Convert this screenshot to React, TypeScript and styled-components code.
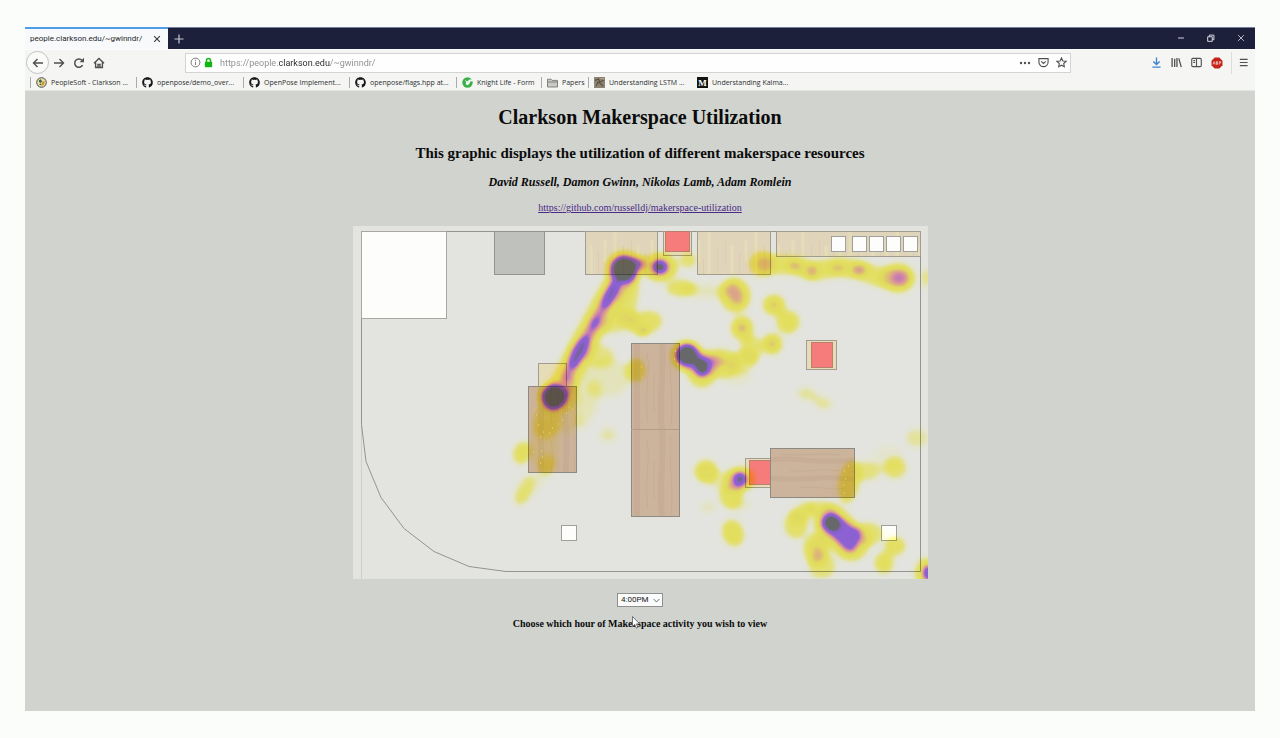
import React, { useState } from "react";
import styled, { createGlobalStyle } from "styled-components";
import { FaGithub } from "react-icons/fa";

const UI = `Roboto, "Open Sans", sans-serif`;
const UI_SMALL = `"Open Sans", "Noto Sans", sans-serif`;
const SERIF = `"Liberation Serif", "Times New Roman", serif`;

const GlobalStyle = createGlobalStyle`
  *, *::before, *::after { box-sizing: border-box; }
  html, body { margin: 0; background: #fbfdfa; }
  button, input, select { font: inherit; color: inherit; }
`;

const Desktop = styled.div`
  min-height: 100vh;
  padding: 27px 25px;
  display: flex;
  flex-direction: column;
`;

const BrowserWindow = styled.div`
  flex: 1;
  display: flex;
  flex-direction: column;
  background: #d1d3cf;
`;

const TitleBar = styled.div`
  display: flex;
  justify-content: space-between;
  height: 22px;
  background: #1d203b;
  border-top: 1px solid #7480a0;
  color: #c9cbd6;
`;

const TabStrip = styled.div`
  display: flex;
`;

const Tab = styled.div`
  display: flex;
  align-items: center;
  justify-content: space-between;
  width: 143px;
  margin-top: -1px;
  padding: 0 5px;
  background: #f8f9fa;
  border-top: 2px solid #4f9ce8;
  color: #26282c;
  font: 8px/12px ${UI};
`;

const IconButton = styled.button<{ $size?: number; $ring?: boolean }>`
  display: inline-flex;
  align-items: center;
  justify-content: center;
  width: ${(p) => p.$size ?? 20}px;
  height: ${(p) => p.$size ?? 20}px;
  padding: 0;
  border: ${(p) => (p.$ring ? "1px solid #c2c3c2" : "0")};
  border-radius: ${(p) => (p.$ring ? "50%" : "0")};
  background: ${(p) => (p.$ring ? "#fafbf9" : "none")};
  flex: none;
`;

const WindowButtons = styled.div`
  display: flex;
  gap: 10px;
  padding-right: 4px;
`;

const NavBar = styled.div`
  display: flex;
  align-items: center;
  height: 26px;
  background: #f5f6f3;
  color: #4e5052;
  border-top: 1px solid #fcfcff;
`;

const NavGroup = styled.div`
  display: flex;
  align-items: center;
  width: 160px;
  padding-left: 1px;
`;

const AddressBar = styled.form`
  flex: 1;
  min-width: 0;
  display: flex;
  align-items: center;
  height: 20px;
  padding-left: 4px;
  gap: 2px;
  background: #fdfefd;
  border: 1px solid #d3d4d2;
`;

const AddressInput = styled.input`
  flex: 1;
  min-width: 0;
  height: 16px;
  margin-left: 4px;
  padding: 0;
  border: 0;
  outline: 0;
  font: 9px/16px ${UI};
  color: transparent;
  caret-color: #26282c;
  background: linear-gradient(90deg, #8b8d8f 58px, #26282c 58px, #26282c 110px, #8b8d8f 110px);
  background-clip: text;
  -webkit-background-clip: text;
`;

const AddressActions = styled.div`
  display: flex;
  align-items: center;
`;

const ToolGroup = styled.div`
  display: flex;
  align-items: center;
  justify-content: flex-end;
  width: 184px;
  padding-right: 2px;
`;

const ToolDivider = styled.span`
  width: 1px;
  height: 22px;
  margin: 0 1px 0 3px;
  background: #dcdddb;
`;

const Bookmarks = styled.nav`
  display: flex;
  align-items: center;
  height: 16px;
  padding-left: 5px;
  background: #f5f6f3;
  border-bottom: 1px solid #e3e4e1;
`;

const Bookmark = styled.a<{ $width: number; $divider?: boolean }>`
  display: flex;
  align-items: center;
  gap: 4px;
  width: ${(p) => p.$width}px;
  height: 11px;
  padding-left: 5px;
  border-left: 1px solid ${(p) => (p.$divider ? "#a9abac" : "transparent")};
  color: #2c2e31;
  font: 7px/10px ${UI_SMALL};
  text-decoration: none;
  white-space: nowrap;
  svg { flex: none; }
`;

const Page = styled.main`
  flex: 1;
  display: flex;
  flex-direction: column;
  align-items: center;
  padding: 14px 8px;
  color: #0b0c0b;
  font-family: ${SERIF};
  text-align: center;
`;

const Title = styled.h1`
  margin: 0 0 14px;
  font-size: 20px;
  line-height: 24px;
`;

const Subtitle = styled.h2`
  margin: 0 0 11px;
  font-size: 15px;
  line-height: 20px;
`;

const Authors = styled.h3`
  margin: 0 0 12px;
  font-size: 12px;
  line-height: 16px;
  font-style: italic;
`;

const RepoLink = styled.a`
  margin-bottom: 12px;
  font-size: 10px;
  line-height: 12px;
  color: #4a2a84;
`;

const FloorPlan = styled.svg`
  display: block;
  width: 100%;
  max-width: 575px;
  height: auto;
  background: #e3e4e0;
  isolation: isolate;
`;

const HourPicker = styled.div`
  display: grid;
  margin: 14px 0 9px;
  align-items: center;
  > * { grid-area: 1 / 1; }
  > svg { justify-self: end; margin-right: 3px; pointer-events: none; }
`;

const HourSelect = styled.select`
  appearance: none;
  width: 46px;
  height: 14px;
  padding: 0 0 0 3px;
  border: 1px solid #8e908f;
  border-radius: 0;
  background: #fafbfa;
  color: #1c1d1e;
  font: 8px/12px ${UI};
`;

const HourLabel = styled.label`
  position: relative;
  font-size: 10px;
  line-height: 16px;
  font-weight: bold;
`;

const Pointer = styled.svg`
  position: absolute;
  left: 47%;
  top: 0;
`;

type Tone = "dark" | "light";

const bookmarks: { label: string; width: number; divider: boolean; icon: React.ReactNode }[] = [
  { label: "PeopleSoft - Clarkson ...", width: 106, divider: true, icon: <SealIcon /> },
  { label: "openpose/demo_over...", width: 107, divider: true, icon: <FaGithub size={11} color="#15171a" /> },
  { label: "OpenPose Implement...", width: 106, divider: true, icon: <FaGithub size={11} color="#15171a" /> },
  { label: "openpose/flags.hpp at...", width: 107, divider: true, icon: <FaGithub size={11} color="#15171a" /> },
  { label: "Knight Life - Form", width: 85, divider: true, icon: <KnightIcon /> },
  { label: "Papers", width: 47, divider: true, icon: <FolderIcon /> },
  { label: "Understanding LSTM ...", width: 103, divider: true, icon: <SpiralIcon /> },
  { label: "Understanding Kalma...", width: 106, divider: false, icon: <MediumIcon /> },
];

function SealIcon() {
  return (
    <svg width="11" height="11" viewBox="0 0 11 11">
      <circle cx="5.5" cy="5.5" r="4.8" fill="#e9dfa6" stroke="#4a4c48" strokeWidth="1" />
      <path d="M2.6 3.4 5 2.2l1 2.2-2 1.8z" fill="#3d5f4f" />
      <path d="M5.6 4.8 8.6 4l-.4 3.6-2.2 1z" fill="#c99a2a" />
      <path d="M3 7.4 5 6.6l.8 2z" fill="#4e514d" />
    </svg>
  );
}

function KnightIcon() {
  return (
    <svg width="11" height="11" viewBox="0 0 11 11">
      <circle cx="5.5" cy="5.5" r="5.2" fill="#3bb04b" />
      <path d="M3 2.8 5.2 4.6 7.6 2.6l3.4-.4-.4 2-2.400.4-.8 2.200-2 1.400-1.600-1 .4-1.800z" fill="#f5f6f3" />
    </svg>
  );
}

function FolderIcon() {
  return (
    <svg width="11" height="10" viewBox="0 0 11 10" fill="#c9cac6" stroke="#777975" strokeWidth=".9">
      <path d="M.5 9V1.2h3.6l1 1.2h5.4V9z" />
      <path d="M.5 4h10" />
    </svg>
  );
}

function SpiralIcon() {
  return (
    <svg width="11" height="11" viewBox="0 0 11 11">
      <path d="M0 0h11v11H0z" fill="#8c8371" />
      <path d="M1 3.5 4.5 2 5.8 5 9.8 3.2M2 9l2-4 2.6 1.6L9 9" fill="none" stroke="#564f42" strokeWidth="1.2" />
      <path d="M6.5 1.5h3v1M1 6.5v2" fill="none" stroke="#b9b19e" strokeWidth=".8" />
    </svg>
  );
}

function MediumIcon() {
  return (
    <svg width="11" height="11" viewBox="0 0 11 11">
      <path d="M0 0h11v11H0z" fill="#12140f" />
      <text x="5.5" y="9" textAnchor="middle" fill="#fff" fontFamily="Liberation Serif, serif" fontWeight="bold" fontSize="9">M</text>
    </svg>
  );
}

function LineIcon({ d, size = 12, width = 1.2, color = "currentColor" }: { d: string; size?: number; width?: number; color?: string }) {
  return (
    <svg width={size} height={size} viewBox="0 0 12 12" fill="none" stroke={color} strokeWidth={width}>
      <path d={d} />
    </svg>
  );
}

/* cx, cy, rx, ry, rotation, intensity */
type Blob = [number, number, number, number, number, number];

const warmBlobs: Blob[] = [
  [624, 268, 19, 18, 0, 0.34],
  [554, 397, 17, 16, 0, 0.34],
  [546, 421, 14, 17, 10, 0.24],
  [545, 445, 15, 26, 0, 0.13],
  [522, 453, 9, 12, 15, 0.3],
  [547, 465, 10, 9, 0, 0.2],
  [524, 490, 8, 17, 25, 0.18],
  [572, 393, 9, 16, 0, 0.22],
  [566, 420, 14, 15, 0, 0.12],
  [588, 405, 10, 26, 20, 0.13],
  [608, 435, 9, 8, 0, 0.15],
  [600, 356, 15, 11, 0, 0.2],
  [606, 378, 26, 20, 0, 0.12],
  [620, 322, 20, 10, -20, 0.22],
  [628, 300, 10, 26, 15, 0.25],
  [636, 370, 10, 12, 0, 0.32],
  [645, 323, 18, 12, -15, 0.28],
  [660, 267, 18, 15, 0, 0.34],
  [688, 260, 9, 8, 0, 0.25],
  [681, 288, 15, 9, 0, 0.28],
  [706, 291, 24, 8, 0, 0.12],
  [735, 295, 16, 18, -15, 0.31],
  [774, 305, 12, 11, 0, 0.29],
  [788, 322, 12, 12, 0, 0.3],
  [742, 328, 12, 13, 0, 0.28],
  [751, 349, 11, 14, 0, 0.26],
  [772, 344, 11, 11, 0, 0.3],
  [741, 362, 17, 11, -20, 0.22],
  [720, 363, 20, 15, 0, 0.25],
  [687, 356, 17, 16, 0, 0.34],
  [702, 369, 16, 19, 0, 0.3],
  [736, 377, 16, 8, 0, 0.1],
  [762, 264, 14, 14, 0, 0.2],
  [926, 278, 5, 10, 0, 0.22],
  [898, 278, 18, 16, 0, 0.24],
  [807, 394, 11, 7, 10, 0.17],
  [823, 403, 10, 7, 15, 0.17],
  [706, 471, 12, 12, 0, 0.27],
  [740, 479, 16, 13, 0, 0.3],
  [731, 496, 12, 13, 0, 0.28],
  [733, 533, 11, 14, -20, 0.31],
  [708, 507, 9, 6, 0, 0.12],
  [740, 505, 12, 7, 0, 0.1],
  [849, 482, 11, 22, 10, 0.3],
  [866, 471, 15, 10, 0, 0.22],
  [895, 468, 12, 11, 0, 0.25],
  [888, 458, 16, 14, 0, 0.07],
  [917, 438, 12, 10, 0, 0.17],
  [796, 525, 12, 14, 0, 0.28],
  [803, 512, 14, 9, -20, 0.22],
  [820, 508, 16, 8, 0, 0.2],
  [816, 549, 13, 16, 0, 0.3],
  [822, 566, 14, 13, 0, 0.24],
  [868, 534, 15, 12, 0, 0.26],
  [895, 546, 11, 10, 0, 0.29],
  [884, 563, 10, 11, 0, 0.3],
  [926, 574, 12, 17, 0, 0.28],
];

const hotBlobs: Blob[] = [
  [611, 294, 6, 15, 30, 0.62],
  [595, 323, 5, 7, 20, 0.34],
  [579, 352, 7, 17, 28, 0.64],
  [638, 263, 8, 7, 0, 0.55],
  [643, 331, 5, 5, 0, 0.36],
  [660, 267, 8, 7, 0, 0.92],
  [735, 294, 8, 12, -25, 0.34],
  [774, 305, 5, 5, 0, 0.3],
  [742, 328, 6, 6, 0, 0.34],
  [772, 344, 5, 5, 0, 0.3],
  [717, 361, 9, 7, 0, 0.34],
  [765, 264, 8, 7, 0, 0.12],
  [795, 266, 8, 5, 10, 0.34],
  [812, 271, 7, 7, 0, 0.34],
  [838, 268, 9, 5, 0, 0.3],
  [859, 270, 8, 6, 0, 0.42],
  [899, 278, 9, 8, 0, 0.34],
  [740, 479, 7, 7, 0, 0.86],
  [817, 551, 6, 7, 0, 0.26],
  [928, 573, 5, 8, 0, 0.9],
  [624, 269, 13, 13, 0, 1],
  [554, 397, 12, 12, 0, 1],
  [687, 355, 11, 11, 0, 1],
  [702, 367, 8, 10, 0, 0.92],
  [831, 523, 10, 9, 0, 0.88],
];

function Blobs({ items }: { items: Blob[] }) {
  return (
    <>
      {items.map(([cx, cy, rx, ry, angle, level]) => (
        <ellipse key={`${cx}-${cy}`} cx={cx} cy={cy} rx={rx} ry={ry} opacity={level} transform={`rotate(${angle} ${cx} ${cy})`} />
      ))}
    </>
  );
}

function Table({ x, y, w, h, tone }: { x: number; y: number; w: number; h: number; tone: Tone }) {
  return <rect x={x + 0.5} y={y + 0.5} width={w} height={h} fill={`url(#${tone}-wood)`} stroke={tone === "dark" ? "#8d8983" : "#a39c8f"} />;
}

const speckles = [
  [536, 414], [538, 424], [543, 431], [549, 432], [558, 423], [562, 419], [566, 412], [569, 406], [534, 408],
  [540, 436], [541, 450], [542, 456], [540, 462], [533, 451], [552, 427], [572, 408], [844, 470], [845, 478],
  [843, 484], [844, 492], [848, 465], [675, 350], [674, 358], [677, 363], [642, 376], [641, 366],
];

function UtilizationMap() {
  return (
    <FloorPlan viewBox="353 226 575 353" role="img" aria-label="Makerspace floor plan with activity heat map">
      <defs>
        <pattern id="light-wood" width="47" height="60" patternUnits="userSpaceOnUse">
          <path d="M0 0h47v60H0z" fill="#e0d5bb" />
          <path d="M4 0v60M27 5v40M41 0v22" stroke="#e5dcba" strokeWidth="3" />
          <path d="M12.500 6v30M20.500 0v25M34.500 12v40M45.500 20v30" stroke="#ddcdaf" />
        </pattern>
        <pattern id="dark-wood" width="48" height="87" x="631" y="343" patternUnits="userSpaceOnUse">
          <path d="M0 0h48v87H0z" fill="#ccb39b" />
          <path d="M6 0v87M31 0c3 30-4 50 0 87" stroke="#c7ad96" strokeWidth="6" fill="none" />
          <path d="M16 10c4 20-3 40 1 70M40 5c-3 25 3 45 0 78M23 30v40" stroke="#c1a790" fill="none" opacity=".6" />
        </pattern>
        <pattern id="board-wood" width="85" height="49" x="770" y="448" patternUnits="userSpaceOnUse">
          <path d="M0 0h85v49H0z" fill="#ccb39b" />
          <path d="M0 12c25-4 50 5 85 0M0 30c30 4 55-4 85 2" stroke="#c7ad96" strokeWidth="5" fill="none" />
          <path d="M10 6c20 3 40-2 60 1M20 22c15 4 30-3 50 1M30 40c18-3 26 3 45 0" stroke="#c1a790" fill="none" opacity=".6" />
        </pattern>
        <filter id="heat" x="353" y="226" width="575" height="353" filterUnits="userSpaceOnUse" colorInterpolationFilters="sRGB">
          <feGaussianBlur stdDeviation="3" />
          <feColorMatrix values="0 0 0 1 0  0 0 0 1 0  0 0 0 1 0  0 0 0 0 1" />
          <feComponentTransfer>
            <feFuncR type="table" tableValues="1 1 1 1 .99 .98 .95 .63 .61 .45 .45" />
            <feFuncG type="table" tableValues="1 1 .99 .98 .96 .8 .6 .43 .42 .455 .455" />
            <feFuncB type="table" tableValues="1 .9 .6 .42 .42 .54 .73 .94 .94 .47 .47" />
          </feComponentTransfer>
        </filter>
      </defs>

      <path d="M361.500 232v347" stroke="#d5cbc7" />
      <path d="M361.500 231.500h559v340H506l-37-5-35-15-30-23-23-31-15-36-4.500-37z" fill="none" stroke="#92948f" />
      <rect x="361.500" y="231.500" width="85" height="87" fill="#fdfefc" stroke="#aaa6a2" />
      <rect x="494.500" y="231.500" width="50" height="43" fill="#bfc1bc" stroke="#92948f" />

      <Table x={585} y={231} w={72} h={43} tone="light" />
      <Table x={697} y={231} w={73} h={43} tone="light" />
      <Table x={776} y={231} w={144} h={25} tone="light" />
      <g fill="#fdfefc" stroke="#9fa09c">
        {[831, 852, 869, 886, 903].map((x) => (
          <rect key={x} x={x + 0.5} y="236.500" width="14" height="15" />
        ))}
        <rect x="561.500" y="525.500" width="15" height="15" />
        <rect x="881.500" y="525.500" width="15" height="15" />
      </g>

      <g fill="#e6dcb8" stroke="#a39c8f">
        <rect x="663.500" y="231.500" width="28" height="24" />
        <rect x="806.500" y="340.500" width="30" height="29" />
        <rect x="745.500" y="458.500" width="25" height="29" />
        <rect x="538.500" y="363.500" width="28" height="23" />
      </g>
      <g fill="#f57c7b" stroke="#b9806f">
        <rect x="665.500" y="231.500" width="24" height="20" />
        <rect x="811.500" y="342.500" width="21" height="25" />
        <rect x="749.500" y="460.500" width="21" height="24" />
      </g>

      <Table x={528} y={386} w={48} h={86} tone="dark" />
      <Table x={631} y={343} w={48} h={173} tone="dark" />
      <path d="M631 429.500h48" stroke="#b39c88" />
      <rect x="770.500" y="448.500" width="84" height="49" fill="url(#board-wood)" stroke="#8d8983" />

      <g style={{ mixBlendMode: "multiply" }}>
        <g filter="url(#heat)">
          <Blobs items={warmBlobs} />
          <g fill="none" stroke="#000" strokeLinecap="round" strokeLinejoin="round">
            <path d="M618 282 609 297 595 323 579 352 562 386" strokeWidth="27" opacity=".3" />
            <path d="M615 286 609 297 595 323 579 352 566 378" strokeWidth="11" opacity=".5" />
            <path d="M762 264 795 265 812 271 840 267 860 270 878 277 902 278" strokeWidth="20" opacity=".28" />
            <path d="M706 473 724 483 740 481" strokeWidth="18" opacity=".15" />
            <path d="M545 472 522 498" strokeWidth="14" opacity=".1" />
            <path d="M832 523 851 543" strokeWidth="37" opacity=".3" />
            <path d="M832 520 853 535 850 545 832 527z" strokeWidth="15" opacity=".66" fill="#000" />
          </g>
          <Blobs items={hotBlobs} />
        </g>
      </g>

      <g fill="#e3c25c">
        {speckles.map(([x, y]) => (
          <rect key={`${x}-${y}`} x={x} y={y} width="1" height="2" />
        ))}
      </g>
    </FloorPlan>
  );
}

const hours = ["8:00AM", "9:00AM", "10:00AM", "11:00AM", "12:00PM", "1:00PM", "2:00PM", "3:00PM", "4:00PM", "5:00PM", "6:00PM", "7:00PM", "8:00PM"];

export default function App() {
  const [hour, setHour] = useState("4:00PM");
  const [url, setUrl] = useState("https://people.clarkson.edu/~gwinndr/");

  return (
    <Desktop>
      <GlobalStyle />
      <BrowserWindow>
        <TitleBar>
          <TabStrip>
            <Tab>
              people.clarkson.edu/~gwinndr/
              <IconButton $size={12} aria-label="Close tab">
                <LineIcon size={10} width={1.3} color="#3a3c40" d="M2.500 2.500l7 7M9.500 2.500l-7 7" />
              </IconButton>
            </Tab>
            <IconButton $size={22} aria-label="New tab">
              <LineIcon width={1.2} color="#c5c8d4" d="M6 1.500v9M1.500 6h9" />
            </IconButton>
          </TabStrip>
          <WindowButtons>
            <IconButton aria-label="Minimize"><LineIcon size={10} color="#d5d7e0" d="M2.500 6h7" /></IconButton>
            <IconButton aria-label="Restore"><LineIcon size={10} color="#d5d7e0" d="M2 4.500h5.500V10H2zM4 4.500V2.500h5.500V8h-2" /></IconButton>
            <IconButton aria-label="Close window"><LineIcon size={10} width={1} color="#d5d7e0" d="M2.500 2.500l7 7M9.500 2.500l-7 7" /></IconButton>
          </WindowButtons>
        </TitleBar>

        <NavBar>
          <NavGroup>
            <IconButton $size={23} $ring aria-label="Back"><LineIcon width={1.4} d="M11 6H1.500M5.500 2 1.500 6l4 4" /></IconButton>
            <IconButton aria-label="Forward"><LineIcon width={1.4} d="M1 6h9.500M6.500 2l4 4-4 4" /></IconButton>
            <IconButton aria-label="Reload">
              <svg width="12" height="12" viewBox="0 0 12 12" fill="none" stroke="currentColor" strokeWidth="1.500">
                <path d="M9.600 8.200A4.200 4.200 0 1 1 9 3.200" />
                <path d="M11 .8v4.400H6.600z" fill="currentColor" stroke="none" />
              </svg>
            </IconButton>
            <IconButton aria-label="Home"><LineIcon width={1.4} d="M1 6.200 6 1.400l5 4.800M2.600 5.500v5h6.800v-5M5 10.500v-3h2v3" /></IconButton>
          </NavGroup>
          <AddressBar onSubmit={(e) => e.preventDefault()}>
            <LineIcon size={11} width={1} color="#6d6f70" d="M6 1.200a4.800 4.800 0 1 0 0 9.600 4.800 4.800 0 0 0 0-9.600M6 5.200v3.600M6 3v1.200" />
            <svg width="11" height="11" viewBox="0 0 12 12">
              <path d="M3.800 6V3.800a2.200 2.200 0 0 1 4.400 0V6" fill="none" stroke="#12b512" strokeWidth="1.600" />
              <rect x="2" y="5.200" width="8" height="6" rx="1" fill="#12b512" />
            </svg>
            <AddressInput aria-label="Address" value={url} onChange={(e) => setUrl(e.target.value)} />
            <AddressActions>
              <IconButton type="button" $size={18} aria-label="Page actions">
                <svg width="12" height="12" viewBox="0 0 12 12" fill="#4e5052">
                  <circle cx="2" cy="6" r="1.200" /><circle cx="6" cy="6" r="1.200" /><circle cx="10" cy="6" r="1.200" />
                </svg>
              </IconButton>
              <IconButton type="button" $size={18} aria-label="Save to Pocket"><LineIcon size={11} d="M1 1.800h10v3.700a5 5 0 0 1-10 0zM3.500 4.700 6 7l2.500-2.300" /></IconButton>
              <IconButton type="button" $size={18} aria-label="Bookmark this page"><LineIcon size={11} d="M6 1l1.500 3.300 3.500.4-2.600 2.400.7 3.500L6 8.900l-3.100 1.700.7-3.500L1 4.700l3.500-.4z" /></IconButton>
            </AddressActions>
          </AddressBar>
          <ToolGroup>
            <IconButton aria-label="Downloads"><LineIcon size={11} width={1.5} color="#3f83d2" d="M6 .5v7.500M2.500 5 6 8.300 9.500 5M1.500 11h9" /></IconButton>
            <IconButton aria-label="Library"><LineIcon size={11} width={1.4} d="M1.200 1v10M4 2v9M6.500 1v10M8.500 1.500 11.200 11" /></IconButton>
            <IconButton aria-label="Sidebars"><LineIcon size={11} width={1.2} d="M2 1.500h8a1.200 1.200 0 0 1 1.200 1.200v6.600A1.200 1.200 0 0 1 10 10.500H2A1.200 1.200 0 0 1 .8 9.300V2.700A1.200 1.200 0 0 1 2 1.500zM6 1.500v9M2.500 4h2M2.500 6h2" /></IconButton>
            <IconButton $size={22} aria-label="Ad blocker">
              <svg width="12" height="12" viewBox="0 0 12 12">
                <path d="M3.700.5h4.600l3.200 3.200v4.600l-3.200 3.200H3.700L.5 8.300V3.700z" fill="#c4231a" />
                <path d="M2 7.500 3 4.600l1 2.900M5.200 4.600v2.800h1.400V6H5.200h1.200V4.600zM8.300 7.500V4.600h1.400V6H8.300" fill="none" stroke="#f0c5bf" strokeWidth=".8" />
              </svg>
            </IconButton>
            <ToolDivider />
            <IconButton aria-label="Menu"><LineIcon size={11} width={1.3} d="M2 2.500h8.500M2 6h8.500M2 9.500h8.500" /></IconButton>
          </ToolGroup>
        </NavBar>

        <Bookmarks aria-label="Bookmarks">
          {bookmarks.map((b) => (
            <Bookmark key={b.label} href="#" $width={b.width} $divider={b.divider}>
              {b.icon}
              {b.label}
            </Bookmark>
          ))}
        </Bookmarks>

        <Page>
          <Title>Clarkson Makerspace Utilization</Title>
          <Subtitle>This graphic displays the utilization of different makerspace resources</Subtitle>
          <Authors>David Russell, Damon Gwinn, Nikolas Lamb, Adam Romlein</Authors>
          <RepoLink href="https://github.com/russelldj/makerspace-utilization">https://github.com/russelldj/makerspace-utilization</RepoLink>
          <UtilizationMap />
          <HourPicker>
            <HourSelect id="hour" value={hour} onChange={(e) => setHour(e.target.value)}>
              {hours.map((h) => (
                <option key={h}>{h}</option>
              ))}
            </HourSelect>
            <LineIcon size={7} width={1.6} color="#5d5f60" d="M1 3.500l5 5 5-5" />
          </HourPicker>
          <HourLabel htmlFor="hour">
            Choose which hour of Makerspace activity you wish to view
            <Pointer width="9" height="13" viewBox="0 0 9 13" aria-hidden="true">
              <path d="M.5.5v10l2.300-2 1.500 3.600 1.600-.7-1.500-3.500h3.200z" fill="#fff" stroke="#55575a" strokeWidth=".8" />
            </Pointer>
          </HourLabel>
        </Page>
      </BrowserWindow>
    </Desktop>
  );
}
